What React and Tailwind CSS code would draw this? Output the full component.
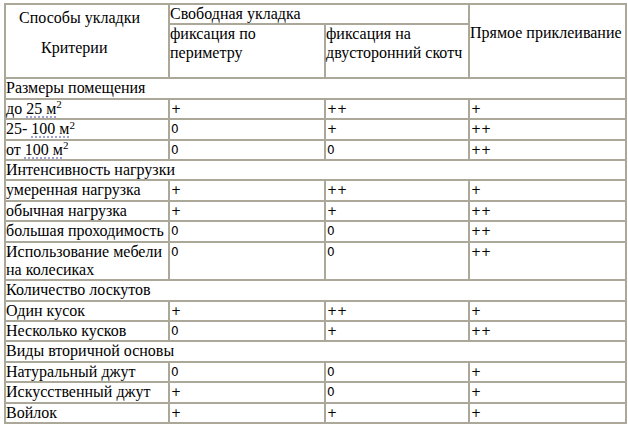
import React from "react";

const serif = "font-['Liberation_Serif',serif] text-[16px] leading-[1.15] text-black";
const sans = "font-['DejaVu_Sans',sans-serif] text-[12px] leading-[15px] text-black";
const bd = "border-2 border-[#aca899]";

function M2({ pre, num }) {
  return (
    <span>
      {pre}
      <span className="underline decoration-dotted decoration-[#8a8ac8] underline-offset-[3px]">
        {num} м
      </span>
      <sup className="text-[11px]">2</sup>
    </span>
  );
}

const sections = [
  {
    title: "Размеры помещения",
    rows: [
      [<M2 pre="до " num="25" />, "+", "++", "+"],
      [<M2 pre="25- " num="100" />, "0", "+", "++"],
      [<M2 pre="от " num="100" />, "0", "0", "++"],
    ],
  },
  {
    title: "Интенсивность нагрузки",
    rows: [
      ["умеренная нагрузка", "+", "++", "+"],
      ["обычная нагрузка", "+", "+", "++"],
      ["большая проходимость", "0", "0", "++"],
      [<span>Использование мебели<br />на колесиках</span>, "0", "0", "++"],
    ],
  },
  {
    title: "Количество лоскутов",
    rows: [
      ["Один кусок", "+", "++", "+"],
      ["Несколько кусков", "0", "+", "++"],
    ],
  },
  {
    title: "Виды вторичной основы",
    rows: [
      ["Натуральный джут", "0", "0", "+"],
      ["Искусственный джут", "+", "0", "+"],
      ["Войлок", "+", "+", "+"],
    ],
  },
];

export default function App() {
  return (
    <div className="w-[628px] h-[428px] bg-white overflow-hidden">
      <table className="ml-[4px] mt-[3px] w-[621px] table-fixed border-collapse">
        <colgroup>
          <col className="w-[164px]" />
          <col className="w-[156px]" />
          <col className="w-[144px]" />
          <col className="w-[157px]" />
        </colgroup>
        <tbody>
          <tr className="h-[20px]">
            <td rowSpan={2} className={`${bd} ${serif} align-top p-0`}>
              <div className="pl-[13px] pt-[4px]">Способы укладки</div>
              <div className="pl-[35px] pt-[12px]">Критерии</div>
            </td>
            <td colSpan={2} className={`${bd} ${serif} align-top p-0`}>
              Свободная укладка
            </td>
            <td rowSpan={2} className={`${bd} ${serif} align-top p-0 pt-[19px] whitespace-nowrap`}>
              Прямое приклеивание
            </td>
          </tr>
          <tr className="h-[54px]">
            <td className={`${bd} ${serif} align-top p-0`}>
              фиксация по<br />периметру
            </td>
            <td className={`${bd} ${serif} align-top p-0`}>
              фиксация на<br />двусторонний скотч
            </td>
          </tr>
          {sections.map((s, i) => (
            <React.Fragment key={i}>
              <tr>
                <td colSpan={4} className={`${bd} ${serif} align-top p-0`}>
                  {s.title}
                </td>
              </tr>
              {s.rows.map((r, j) => (
                <tr key={j}>
                  <td className={`${bd} ${serif} align-top p-0`}>{r[0]}</td>
                  <td className={`${bd} ${sans} align-top p-0 pl-[1px] pt-[2px]`}>{r[1]}</td>
                  <td className={`${bd} ${sans} align-top p-0 pl-[1px] pt-[2px]`}>{r[2]}</td>
                  <td className={`${bd} ${sans} align-top p-0 pl-[1px] pt-[2px]`}>{r[3]}</td>
                </tr>
              ))}
            </React.Fragment>
          ))}
        </tbody>
      </table>
    </div>
  );
}
